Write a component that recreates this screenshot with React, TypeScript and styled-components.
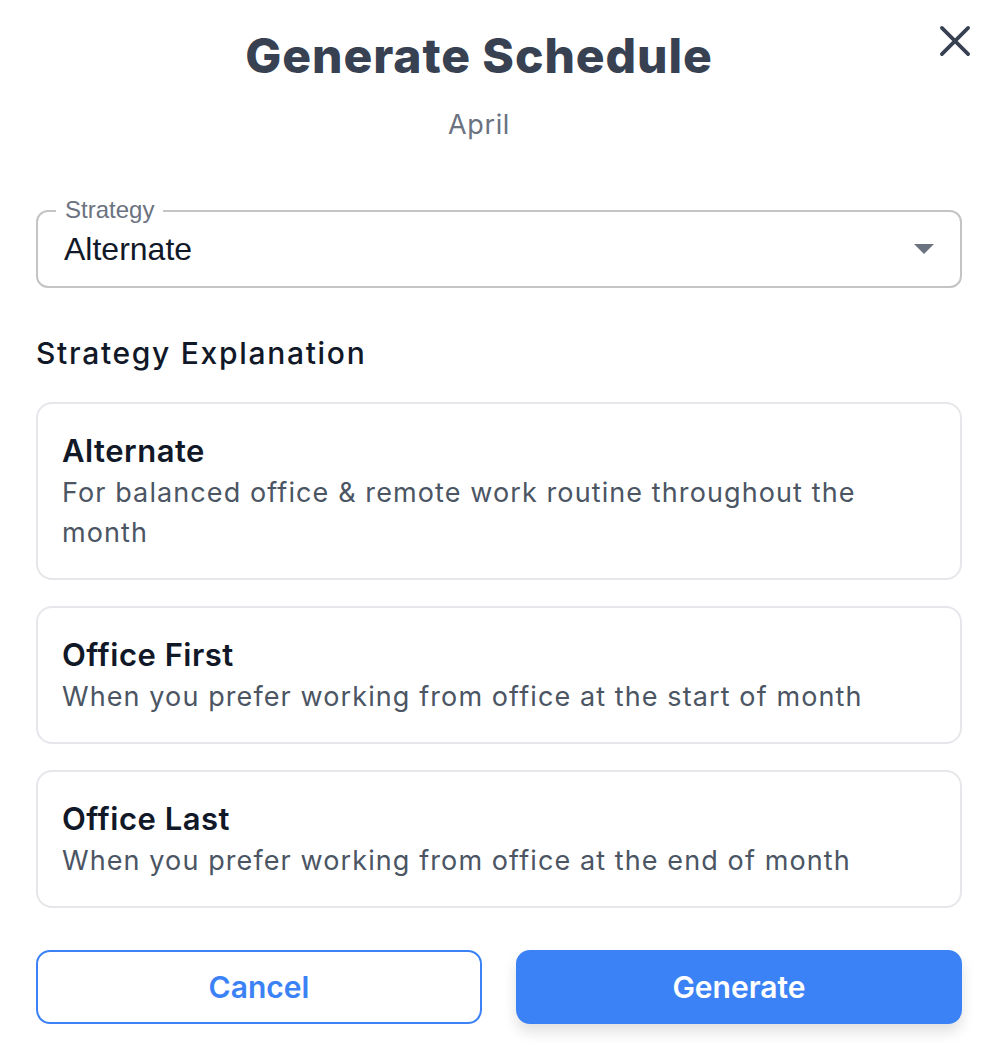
import React, { useState } from "react";
import styled, { createGlobalStyle } from "styled-components";

const GlobalStyle = createGlobalStyle`
  html, body {
    margin: 0;
    padding: 0;
    background: #ffffff;
  }
  * {
    box-sizing: border-box;
  }
`;

const Dialog = styled.section`
  width: 998px;
  min-height: 1058px;
  padding: 24px 36px 0;
  display: flex;
  flex-direction: column;
  font-family: Inter, "Open Sans", sans-serif;
  background: #ffffff;
`;

const Header = styled.header`
  position: relative;
  display: flex;
  flex-direction: column;
  align-items: center;
  padding-right: 40px;
`;

const Title = styled.h1`
  margin: 0;
  font-size: 48px;
  line-height: 64px;
  font-weight: 800;
  color: #374151;
  letter-spacing: 0.9px;
`;

const Subtitle = styled.p`
  margin: 19px 0 0;
  font-size: 27px;
  line-height: 36px;
  color: #6b7280;
  letter-spacing: 0.6px;
`;

const CloseButton = styled.button`
  position: absolute;
  top: -4px;
  right: -14px;
  width: 42px;
  height: 42px;
  border: none;
  background: none;
  padding: 0;
  cursor: pointer;
  display: flex;
  align-items: center;
  justify-content: center;
`;

const Field = styled.div`
  position: relative;
  margin-top: 67px;
  height: 78px;
  border: 2px solid #c4c4c4;
  border-radius: 12px;
  display: flex;
  align-items: center;
  padding: 0 26px;
  font-family: "Liberation Sans", Arial, sans-serif;
`;

const FieldLabel = styled.span`
  position: absolute;
  top: -16px;
  left: 18px;
  padding: 0 9px;
  background: #ffffff;
  font-size: 24px;
  line-height: 28px;
  color: #6b7280;
`;

const FieldValue = styled.span`
  flex: 1;
  font-size: 32px;
  color: #111827;
`;

const SectionTitle = styled.h2`
  margin: 45px 0 0;
  font-size: 30px;
  line-height: 40px;
  font-weight: 500;
  color: #111827;
  letter-spacing: 1.7px;
`;

const CardList = styled.div`
  margin-top: 29px;
  display: flex;
  flex-direction: column;
  gap: 26px;
`;

const Card = styled.div`
  border: 2px solid #e5e7eb;
  border-radius: 16px;
  padding: 25px 24px;
  display: flex;
  flex-direction: column;
`;

const CardTitle = styled.h3`
  margin: 0;
  font-size: 31px;
  line-height: 44px;
  font-weight: 600;
  color: #111827;
  letter-spacing: 0.5px;
`;

const CardText = styled.p`
  margin: 0;
  font-size: 27px;
  line-height: 40px;
  color: #4b5563;
  letter-spacing: 1.1px;
`;

const Actions = styled.div`
  margin-top: 42px;
  display: grid;
  grid-template-columns: 1fr 1fr;
  gap: 34px;
`;

const Button = styled.button<{ $primary?: boolean }>`
  height: 74px;
  border-radius: 14px;
  font-family: Inter, "Open Sans", sans-serif;
  font-size: 30px;
  font-weight: 600;
  cursor: pointer;
  border: 2px solid #3b82f6;
  color: ${(p) => (p.$primary ? "#ffffff" : "#3b82f6")};
  background: ${(p) => (p.$primary ? "#3b82f6" : "#ffffff")};
  box-shadow: ${(p) =>
    p.$primary ? "0 8px 14px rgba(0, 0, 0, 0.12)" : "none"};
`;

const strategies = [
  {
    name: "Alternate",
    text: "For balanced office & remote work routine throughout the month",
  },
  {
    name: "Office First",
    text: "When you prefer working from office at the start of month",
  },
  {
    name: "Office Last",
    text: "When you prefer working from office at the end of month",
  },
];

const App: React.FunctionComponent = () => {
  const [strategy] = useState("Alternate");

  return (
    <Dialog>
      <GlobalStyle />
      <Header>
        <Title>Generate Schedule</Title>
        <Subtitle>April</Subtitle>
        <CloseButton aria-label="close">
          <svg width="42" height="42" viewBox="0 0 24 24" fill="none">
            <path
              d="M4.5 4.5l15 15M19.5 4.5l-15 15"
              stroke="#374151"
              strokeWidth="2.1"
              strokeLinecap="round"
            />
          </svg>
        </CloseButton>
      </Header>

      <Field>
        <FieldLabel>Strategy</FieldLabel>
        <FieldValue>{strategy}</FieldValue>
        <svg width="20" height="10" viewBox="0 0 20 10">
          <path d="M0 0h20L10 10z" fill="#6b7280" />
        </svg>
      </Field>

      <SectionTitle>Strategy Explanation</SectionTitle>
      <CardList>
        {strategies.map((s) => (
          <Card key={s.name}>
            <CardTitle>{s.name}</CardTitle>
            <CardText>{s.text}</CardText>
          </Card>
        ))}
      </CardList>

      <Actions>
        <Button>Cancel</Button>
        <Button $primary>Generate</Button>
      </Actions>
    </Dialog>
  );
};

export default App;
